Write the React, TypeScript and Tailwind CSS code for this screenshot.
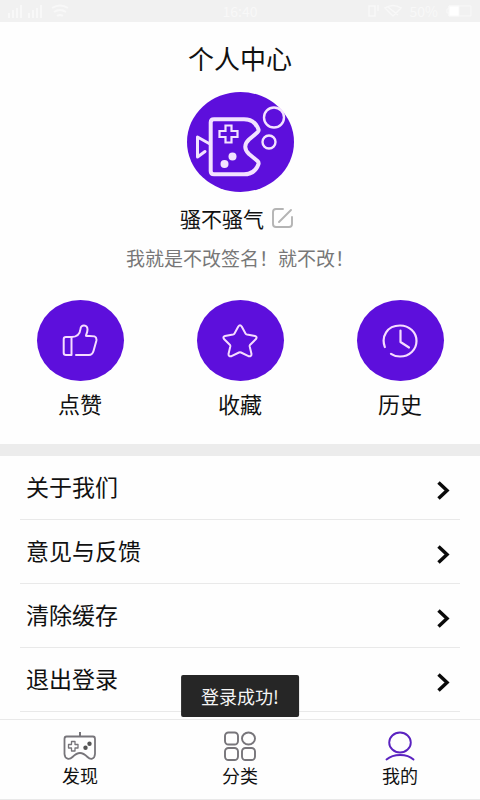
import type { ReactNode } from "react";

function Avatar() {
  return (
    <svg viewBox="0 0 107 100" className="h-[100px] w-[107px]" fill="none" stroke="#f3e2ff" role="img" aria-label="头像">
      <ellipse cx="53.5" cy="50" rx="53.5" ry="50" fill="#5d0fdc" stroke="none" />
      <path
        d="M27 27.300H57C65 27.300 69 31 71.500 37.500Q72 39 70.500 40.300L62 47.500Q54.500 54.500 62 62L70.500 69Q72 70.500 71.500 72C69 79 65 82.300 57 82.300H27Q23.700 82.300 23.700 79V30.500Q23.700 27.300 27 27.300Z"
        strokeWidth="4"
        strokeLinejoin="round"
      />
      <path d="M23 52L10.500 45V65L18 59.500" strokeWidth="3" strokeLinecap="round" strokeLinejoin="round" />
      <path d="M38.500 33.500H44.500V39H50.500V45H44.500V50.500H38.500V45H32.500V39H38.500Z" strokeWidth="2.200" />
      <circle cx="45.500" cy="64.500" r="4" fill="#f3e2ff" stroke="none" />
      <circle cx="37.500" cy="72" r="4" fill="#f3e2ff" stroke="none" />
      <circle cx="87" cy="25.500" r="10" strokeWidth="2.400" />
      <circle cx="82" cy="50" r="6.500" strokeWidth="2.400" />
    </svg>
  );
}

function ThumbIcon() {
  return (
    <svg viewBox="0 0 36 34" className="h-[34px] w-9" fill="none" stroke="#f6dcff" strokeWidth="2" strokeLinecap="round" strokeLinejoin="round">
      <path d="M9.500 13H4Q1.700 13 1.700 15.300V29Q1.700 31 4 31H9.500Z" />
      <path d="M9.500 13C15 13 18 9.500 18.500 5C18.700 0 25.500 .5 25.500 5.500C25.500 8.500 24 10.500 24 11.800C25 12.400 30 11.800 32.500 12.400C34.500 13.200 34.800 14.500 34.300 17L31.500 27Q30.300 31 27 31H14" />
    </svg>
  );
}

function StarIcon() {
  return (
    <svg viewBox="0 0 38 34" className="h-[34px] w-[38px]" fill="none" stroke="#f6dcff" strokeWidth="2" strokeLinejoin="round">
      <path d="M17.300 2.500Q19 0 20.700 2.500L24.500 9.500Q25 10.400 26 10.600L34 12Q36.500 12.700 35 15L29.200 20.700Q28.500 21.500 28.700 22.500L30.500 30Q30.500 33 27.500 32.200L20 28.500Q19 28 18 28.500L10.500 32.200Q7.500 33 7.500 30L9.300 22.500Q9.500 21.500 8.800 20.700L3 15Q1.500 12.700 4 12L12 10.600Q13 10.400 13.500 9.500Z" />
    </svg>
  );
}

function ClockIcon() {
  return (
    <svg viewBox="0 0 36 34" className="h-[34px] w-9" fill="none" stroke="#f6dcff" strokeWidth="2.200" strokeLinecap="round" strokeLinejoin="round">
      <path d="M2.800 23C-1 12.500 5 1.500 18 1.500C27.500 1.500 34.500 8.500 34.500 17C34.500 25.500 27.500 32.500 18 32.500C14.500 32.500 11.500 31.500 9 29.800" />
      <path d="M18.500 6.500V18L27 23.500" />
    </svg>
  );
}

function PadIcon() {
  return (
    <svg viewBox="0 0 34 30" className="h-[30px] w-[34px]" fill="none" stroke="#77757a" strokeWidth="1.800" strokeLinejoin="round">
      <path d="M17 1V5.500" strokeWidth="2" />
      <path d="M3.500 5.500H30Q32 5.500 32 8V23C31.500 28.500 27.500 29 24.500 26C21 22.500 19.500 22 17 22C14.500 22 13 22.500 9.500 26C6.500 29 2 28.500 1.500 23V8Q1.500 5.500 3.500 5.500Z" />
      <path d="M8.500 10.500H12V13.500H15V17H12V20H8.500V17H5.500V13.500H8.500Z" strokeWidth="1.300" />
      <circle cx="26.500" cy="12.800" r="2.200" fill="#555" stroke="none" />
      <circle cx="22.500" cy="16.800" r="2.200" fill="#555" stroke="none" />
    </svg>
  );
}

function CategoryIcon() {
  return (
    <svg viewBox="0 0 34 30" className="h-[30px] w-[34px]" fill="none" stroke="#77757a" strokeWidth="1.900">
      <rect x="2" y="1.500" width="13" height="12" rx="3.500" />
      <ellipse cx="25.500" cy="7.500" rx="6.500" ry="6" />
      <rect x="2" y="17" width="13" height="12" rx="3.500" />
      <rect x="19" y="17" width="13" height="12" rx="3.500" />
    </svg>
  );
}

function PersonIcon() {
  return (
    <svg viewBox="0 0 34 30" className="h-[30px] w-[34px]" fill="none" stroke="#5a22c0" strokeWidth="1.900" strokeLinecap="round">
      <ellipse cx="17" cy="11.500" rx="10.800" ry="10" />
      <path d="M3.500 28.500C10.500 22.500 24 22.500 30.500 28.500" />
    </svg>
  );
}

const actions: { label: string; icon: ReactNode }[] = [
  { label: "点赞", icon: <ThumbIcon /> },
  { label: "收藏", icon: <StarIcon /> },
  { label: "历史", icon: <ClockIcon /> },
];

const rows = ["关于我们", "意见与反馈", "清除缓存", "退出登录"];

const tabs: { label: string; icon: ReactNode }[] = [
  { label: "发现", icon: <PadIcon /> },
  { label: "分类", icon: <CategoryIcon /> },
  { label: "我的", icon: <PersonIcon /> },
];

function StatusBar() {
  return (
    <div className="grid h-[22px] grid-cols-3 items-center bg-[#f1f1f1] px-2 text-[14px] leading-5 text-[#f8f8f8]">
      <svg viewBox="0 0 62 14" className="h-3.5 w-[62px]" fill="none" stroke="#f8f8f8" strokeWidth="2">
        <path d="M1 14V9M5 14V6M9 14V4M13 14V1M21 14V9M25 14V6M29 14V4M33 14V1" />
        <path d="M44 4Q52 -1 60 4M46 8Q52 4 58 8M49 12Q52 10 55 12" />
      </svg>
      <span className="text-center">16:40</span>
      <div className="flex items-center justify-end gap-2">
        <svg viewBox="0 0 34 14" className="h-3.5 w-[34px]" fill="none" stroke="#f8f8f8" strokeWidth="1.500">
          <path d="M1 2H7V12H1ZM10 1V7M17 4Q25 -1 33 4L25 12ZM20 3L30 11" />
        </svg>
        <span>50%</span>
        <svg viewBox="0 0 26 12" className="h-3 w-[26px]" fill="none" stroke="#f8f8f8">
          <path d="M3 1H25V11H3V8H1V4H3Z" />
          <path d="M3 1H13V11H3Z" fill="#ffffff" />
        </svg>
      </div>
    </div>
  );
}

export default function App() {
  return (
    <div className="relative flex min-h-screen flex-col bg-[#fefefe] font-['Noto_Sans_CJK_SC',sans-serif] text-[#111111]">
      <StatusBar />
      <main className="flex-1">
        <section className="flex flex-col items-center pt-4">
          <h1 className="text-[26px] leading-10">个人中心</h1>
          <div className="mt-3.5">
            <Avatar />
          </div>
          <div className="mt-2.5 flex items-center gap-2 pr-1.5">
            <h2 className="text-[21px] leading-8">骚不骚气</h2>
            <button type="button" aria-label="编辑昵称">
              <svg viewBox="0 0 22 20" className="h-5 w-[22px]" fill="none" stroke="#b4b4b4" strokeWidth="1.900" strokeLinecap="round">
                <path d="M11 1H4Q1 1 1 4V16Q1 19 4 19H17Q20 19 20 16V9" />
                <path d="M7 14L19 2" />
              </svg>
            </button>
          </div>
          <p className="mt-2 w-full text-center text-[19px] leading-8 text-[#777777]">我就是不改签名！就不改！</p>
        </section>

        <section className="mt-[26px] grid grid-cols-3 pb-[25px]">
          {actions.map((a) => (
            <button key={a.label} type="button" className="flex flex-col items-center gap-1.5">
              <span className="flex h-[81px] w-[87px] items-center justify-center rounded-[50%] bg-[#5d0fdc]">{a.icon}</span>
              <span className="text-[22px] leading-8">{a.label}</span>
            </button>
          ))}
        </section>

        <div className="h-3 bg-[#ececec]" />

        <ul className="px-5">
          {rows.map((r) => (
            <li key={r} className="border-b border-[#e9e9e9]">
              <button type="button" className="flex h-[63px] w-full items-center justify-between pr-2.5 pb-1 pl-1.5 text-[23px] leading-8">
                {r}
                <svg viewBox="0 0 13 19" className="mt-2.5 h-[19px] w-[13px]" fill="none" stroke="#0a0a0a" strokeWidth="3.500">
                  <path d="M1.500 1.500L10 9.500L1.500 17.500" />
                </svg>
              </button>
            </li>
          ))}
        </ul>
      </main>

      <nav className="mt-1.5 grid h-[81px] grid-cols-3 border-y border-[#e9e9e9]">
        {tabs.map((t) => (
          <a key={t.label} href="#" className="flex flex-col items-center pt-[11px]">
            {t.icon}
            <span className="text-[18px] leading-7">{t.label}</span>
          </a>
        ))}
      </nav>

      <div role="status" className="absolute bottom-[83px] left-1/2 -translate-x-1/2 rounded-[2px] bg-[#262626] px-5 py-[7px] text-[18px] leading-7 whitespace-nowrap text-[#f5f5f5]">
        登录成功!
      </div>
    </div>
  );
}
